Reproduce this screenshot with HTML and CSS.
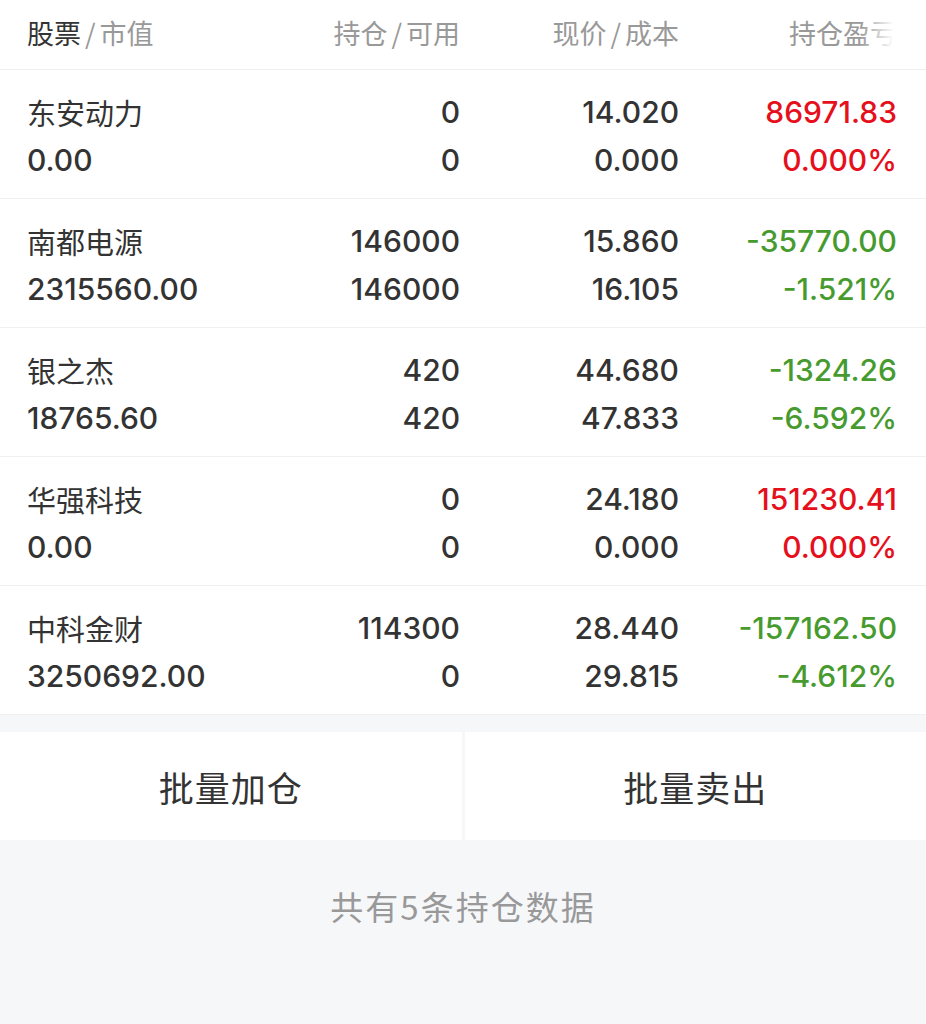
FILE: index.html
```html
<!DOCTYPE html>
<html lang="zh-CN">
<head>
<meta charset="utf-8">
<title>持仓</title>
<link rel="stylesheet" href="styles.css">
</head>
<body>
<div class="page">
  <div class="head">
    <div class="hcell left"><span class="strong">股票</span><span class="sl">/</span>市值</div>
    <div class="hcell">持仓<span class="sl">/</span>可用</div>
    <div class="hcell">现价<span class="sl">/</span>成本</div>
    <div class="hcell">持仓盈亏</div>
  </div>

  <div class="row">
    <div class="cell left"><div class="name">东安动力</div><div>0.00</div></div>
    <div class="cell"><div>0</div><div>0</div></div>
    <div class="cell"><div>14.020</div><div>0.000</div></div>
    <div class="cell up"><div>86971.83</div><div>0.000%</div></div>
  </div>
  <div class="row">
    <div class="cell left"><div class="name">南都电源</div><div>2315560.00</div></div>
    <div class="cell"><div>146000</div><div>146000</div></div>
    <div class="cell"><div>15.860</div><div>16.105</div></div>
    <div class="cell down"><div>-35770.00</div><div>-1.521%</div></div>
  </div>
  <div class="row">
    <div class="cell left"><div class="name">银之杰</div><div>18765.60</div></div>
    <div class="cell"><div>420</div><div>420</div></div>
    <div class="cell"><div>44.680</div><div>47.833</div></div>
    <div class="cell down"><div>-1324.26</div><div>-6.592%</div></div>
  </div>
  <div class="row">
    <div class="cell left"><div class="name">华强科技</div><div>0.00</div></div>
    <div class="cell"><div>0</div><div>0</div></div>
    <div class="cell"><div>24.180</div><div>0.000</div></div>
    <div class="cell up"><div>151230.41</div><div>0.000%</div></div>
  </div>
  <div class="row">
    <div class="cell left"><div class="name">中科金财</div><div>3250692.00</div></div>
    <div class="cell"><div>114300</div><div>0</div></div>
    <div class="cell"><div>28.440</div><div>29.815</div></div>
    <div class="cell down"><div>-157162.50</div><div>-4.612%</div></div>
  </div>

  <div class="actions">
    <div class="btn">批量加仓</div>
    <div class="btn">批量卖出</div>
  </div>

  <div class="footer">共有5条持仓数据</div>
</div>
</body>
</html>
```

FILE: styles.css
```css
* { box-sizing: border-box; }
html, body { margin: 0; padding: 0; }
body {
  width: 926px;
  height: 1024px;
  overflow: hidden;
  background: #f6f7f9;
  font-family: Inter, "Noto Sans CJK SC", sans-serif;
  color: #333;
}
.page { display: flex; flex-direction: column; }

.head {
  position: relative;
  display: grid;
  grid-template-columns: 216px 217px 219px 218px;
  padding: 0 29px 4px 27px;
  height: 70px;
  align-items: center;
  background: #fff;
  border-bottom: 1px solid #eeeeee;
  font-family: "Noto Sans CJK SC", sans-serif;
  font-size: 27px;
  color: #999;
}
.head::after {
  content: "";
  position: absolute;
  top: 0;
  right: 0;
  width: 66px;
  height: 68px;
  background: linear-gradient(to right, rgba(255,255,255,0) 0, #fff 34px);
}
.hcell { text-align: right; white-space: nowrap; }
.hcell.left { text-align: left; }
.strong { color: #333; }
.sl { margin: 0 4px; }

.row {
  display: grid;
  grid-template-columns: 216px 217px 219px 218px;
  padding: 18px 29px 14px 27px;
  background: #fff;
  border-bottom: 1px solid #f0f0f0;
  font-size: 30px;
  line-height: 48px;
  font-weight: 500;
}
.cell { text-align: right; white-space: nowrap; }
.cell.left { text-align: left; }
.name { font-family: "Noto Sans CJK SC", sans-serif; font-weight: 400; font-size: 29px; }
.up { color: #e5101c; }
.down { color: #479b2e; }

.actions {
  display: flex;
  gap: 3px;
  margin-top: 17px;
  height: 108px;
}
.btn {
  flex: 1;
  background: #fff;
  display: flex;
  align-items: center;
  justify-content: center;
  font-family: "Noto Sans CJK SC", sans-serif;
  font-size: 35px;
  letter-spacing: 1px;
  color: #333;
}

.footer {
  height: 132px;
  display: flex;
  align-items: center;
  justify-content: center;
  font-family: "Noto Sans CJK SC", sans-serif;
  font-size: 33px;
  letter-spacing: 2px;
  color: #999;
}
```
